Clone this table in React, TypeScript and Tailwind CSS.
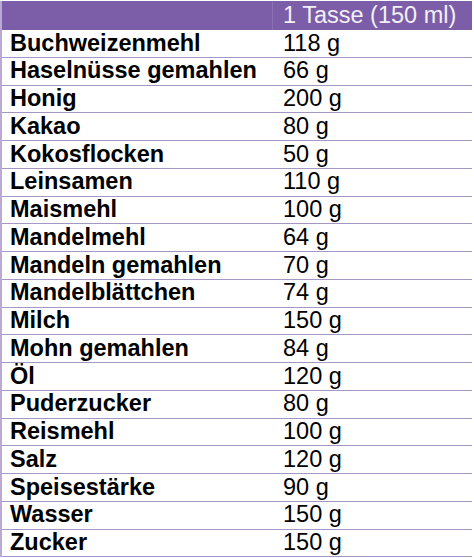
const rows: [string, string][] = [
  ["Buchweizenmehl", "118 g"],
  ["Haselnüsse gemahlen", "66 g"],
  ["Honig", "200 g"],
  ["Kakao", "80 g"],
  ["Kokosflocken", "50 g"],
  ["Leinsamen", "110 g"],
  ["Maismehl", "100 g"],
  ["Mandelmehl", "64 g"],
  ["Mandeln gemahlen", "70 g"],
  ["Mandelblättchen", "74 g"],
  ["Milch", "150 g"],
  ["Mohn gemahlen", "84 g"],
  ["Öl", "120 g"],
  ["Puderzucker", "80 g"],
  ["Reismehl", "100 g"],
  ["Salz", "120 g"],
  ["Speisestärke", "90 g"],
  ["Wasser", "150 g"],
  ["Zucker", "150 g"],
];

export default function App() {
  return (
    <div
      className="w-[474px] h-[558px] bg-white overflow-hidden pt-[1px]"
      style={{ fontFamily: '"Liberation Sans", Arial, sans-serif' }}
    >
      <div className="w-[472px] border-l-[2px] border-[#b9a9d4]">
        {/* Header */}
        <div className="grid grid-cols-[270px_1fr] h-[29px] bg-[#7b5ea7] text-[23.5px] leading-none text-[#f3f0f8]">
          <div />
          <div className="flex items-center pl-[10px] border-l border-[#8b71b4]">1 Tasse (150 ml)</div>
        </div>

        {/* Rows */}
        {rows.map(([name, amount]) => (
          <div
            key={name}
            className="grid grid-cols-[270px_1fr] h-[27.75px] border-b border-[#a497c4] text-[23.5px] leading-none text-black"
          >
            <div className="flex items-center pl-[8px] font-bold">{name}</div>
            <div className="flex items-center pl-[11px]">{amount}</div>
          </div>
        ))}
      </div>
    </div>
  );
}
